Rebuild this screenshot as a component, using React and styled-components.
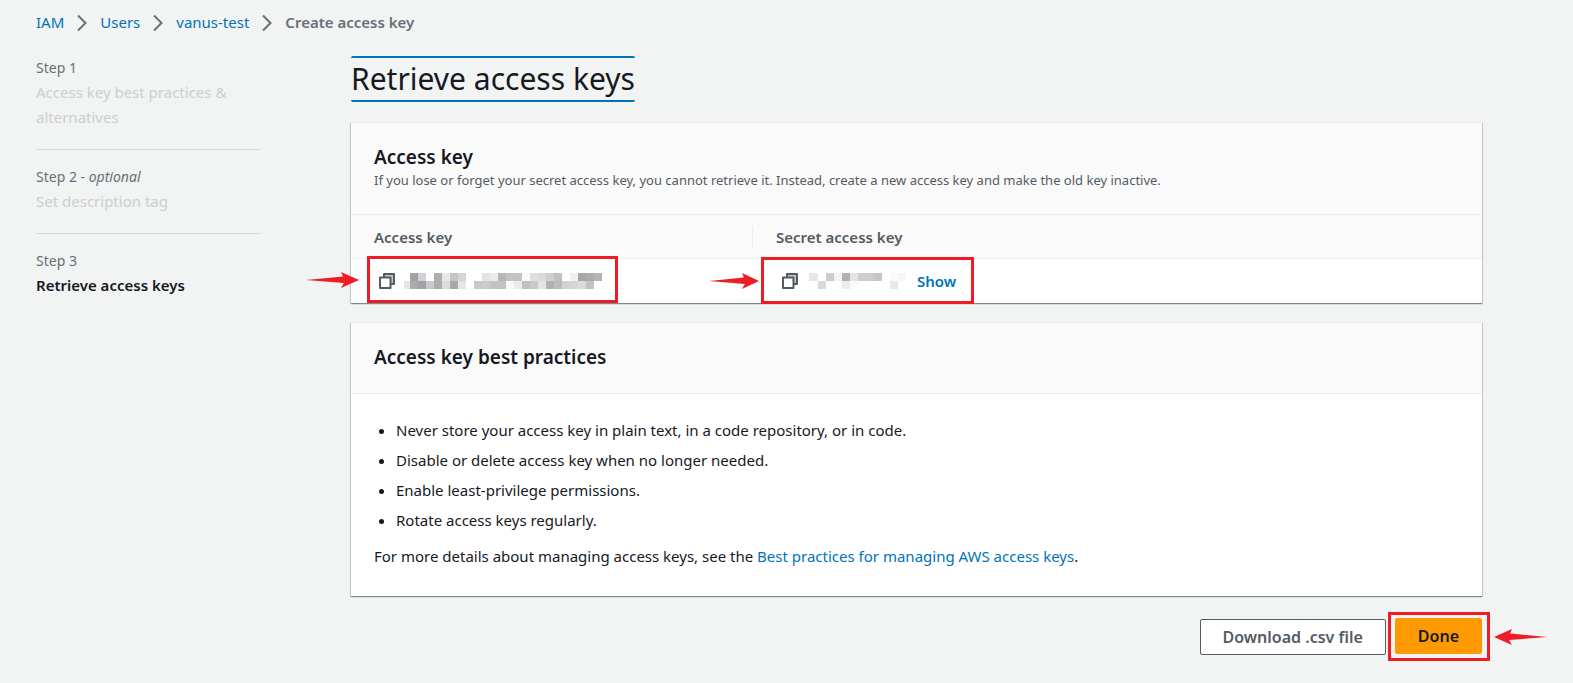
import React from 'react';
import styled, { createGlobalStyle, css } from 'styled-components';

const color = {
  page: '#f2f3f3',
  text: '#16191f',
  muted: '#687078',
  secondary: '#545b64',
  disabled: '#cbcfcf',
  line: '#eaeded',
  link: '#0073bb',
  annotation: '#ee1c25',
};

const GlobalStyle = createGlobalStyle`
  * { box-sizing: border-box; }
  body {
    margin: 0;
    background: ${color.page};
    color: ${color.text};
    font-family: "Noto Sans", "Open Sans", sans-serif;
    font-size: 15px;
    line-height: 24px;
  }
`;

const Page = styled.div`
  padding: 10px 91px 20px 36px;
`;

const Link = styled.a`
  color: ${color.link};
  text-decoration: none;
  &:hover { text-decoration: underline; }
`;

const Breadcrumbs = styled.ol`
  display: flex;
  align-items: center;
  margin: 0;
  padding: 0;
  list-style: none;
`;

const Crumb = styled.li`
  display: flex;
  align-items: center;
  color: ${color.muted};
  font-weight: ${(p) => (p.$current ? 600 : 400)};
`;

const Chevron = styled.svg`
  display: block;
  width: 10px;
  height: 18px;
  margin: 2px 13px 0;
  fill: none;
  stroke: ${color.muted};
  stroke-width: 2;
`;

const Columns = styled.div`
  display: grid;
  grid-template-columns: 225px minmax(0, 1fr);
  column-gap: 90px;
  margin-top: 22px;
`;

const Steps = styled.ol`
  margin: 0;
  padding: 0;
  list-style: none;
`;

const Step = styled.li`
  padding-bottom: 19px;
  & + & {
    border-top: 1px solid #d5dbdb;
    padding-top: 15px;
  }
`;

const StepLabel = styled.div`
  color: ${color.muted};
  font-size: 14px;
`;

const StepName = styled.div`
  line-height: 25px;
  color: ${(p) => (p.$active ? color.text : color.disabled)};
  font-weight: ${(p) => (p.$active ? 600 : 400)};
`;

const Main = styled.main`
  display: flex;
  flex-direction: column;
  align-items: stretch;
`;

const Title = styled.h1`
  align-self: flex-start;
  margin: 0 0 20px;
  border: solid ${color.link};
  border-width: 2px 0;
  border-radius: 2px;
  font-size: 30px;
  font-weight: 400;
  line-height: 42px;
`;

const Card = styled.section`
  margin-bottom: 19px;
  border-top: 1px solid ${color.line};
  background: #fff;
  box-shadow: 0 1px 1px 0 rgba(0, 28, 36, 0.3), 1px 1px 1px 0 rgba(0, 28, 36, 0.15),
    -1px 1px 1px 0 rgba(0, 28, 36, 0.15);
`;

const CardHeader = styled.header`
  padding: 22px 23px 23px;
  border-bottom: 1px solid ${color.line};
  background: #fafafa;
`;

const CardTitle = styled.h2`
  margin: 0;
  font-size: 19px;
  font-weight: 600;
  line-height: 25px;
`;

const CardNote = styled.p`
  margin: 0;
  color: ${color.secondary};
  font-size: 13px;
  line-height: 21px;
`;

const Table = styled.table`
  width: 100%;
  border-collapse: separate;
  border-spacing: 0;
  table-layout: fixed;
`;

const HeadCell = styled.th`
  width: ${(p) => (p.$narrow ? '402px' : 'auto')};
  height: 44px;
  padding: 0;
  border-bottom: 1px solid ${color.line};
  background: #fafafa;
  color: ${color.secondary};
  font-weight: 600;
  text-align: left;
`;

const HeadLabel = styled.div`
  padding: 0 23px;
  line-height: 22px;
  ${(p) => p.$divided && css`border-right: 1px solid ${color.line};`}
`;

const Cell = styled.td`
  height: 44px;
  padding: 0 ${(p) => (p.$narrow ? 16 : 8)}px;
`;

const outline = css`
  border: 3px solid ${color.annotation};
`;

/* The frame is taller than its row, so it overlaps the row's edges. */
const Highlight = styled.div`
  ${outline}
  position: relative;
  display: flex;
  align-items: center;
  width: fit-content;
  height: 47px;
  ${(p) =>
    p.$secret
      ? css`
          margin: -2px 0 -1px;
          padding: 0 15px 0 18px;
        `
      : css`
          margin: -3px 0 0;
          padding: 2px 4px 0 9px;
        `}
`;

const CopyButton = styled.button`
  display: flex;
  padding: 0;
  border: 0;
  background: none;
  color: ${color.secondary};
  cursor: pointer;
`;

const Mosaic = styled.svg`
  display: block;
  margin: 0 11px;
  shape-rendering: crispEdges;
  ${(p) => p.$tight && css`margin: 0 9px;`}
`;

const ShowButton = styled.button`
  padding: 0;
  border: 0;
  background: none;
  color: ${color.link};
  font: inherit;
  font-weight: 600;
  cursor: pointer;
`;

const ArrowDrawing = styled.svg`
  position: absolute;
  top: 50%;
  width: ${(p) => p.$length}px;
  height: 18px;
  fill: ${color.annotation};
  pointer-events: none;
  ${(p) =>
    p.$left
      ? css`left: calc(100% + 7px); transform: translateY(-50%) scaleX(-1);`
      : css`right: calc(100% + ${p.$gap}px); transform: translateY(-50%);`}
`;

const CardBody = styled.div`
  padding: 24px 23px 28px;
`;

const Practices = styled.ul`
  display: grid;
  row-gap: 6px;
  margin: 0 0 12px;
  padding-left: 22px;
`;

const Paragraph = styled.p`
  margin: 0;
`;

const Actions = styled.div`
  display: flex;
  justify-content: flex-end;
  align-items: center;
  margin: -3px -8px 0 0;
`;

const Button = styled.button`
  height: 36px;
  padding: 0 22px;
  border: 1px solid ${(p) => (p.$primary ? '#ff9900' : color.secondary)};
  border-radius: 2px;
  background: ${(p) => (p.$primary ? '#ff9900' : '#fff')};
  color: ${(p) => (p.$primary ? color.text : color.secondary)};
  font: inherit;
  font-size: 16px;
  font-weight: 600;
  line-height: 22px;
  cursor: pointer;
`;

const ActionHighlight = styled.div`
  ${outline}
  position: relative;
  display: flex;
  margin-left: 2px;
  padding: 3px 5px 4px 4px;
`;

function Arrow({ length = 53, ...props }) {
  return (
    <ArrowDrawing
      viewBox="0 0 53 18"
      preserveAspectRatio="none"
      aria-hidden="true"
      $length={length}
      {...props}
    >
      <path d="M0 9 37 5.500 35 1 53 9 35 17 38 12Z" />
    </ArrowDrawing>
  );
}

function Separator() {
  return (
    <Chevron viewBox="0 0 10 18" aria-hidden="true">
      <path d="M1 1.5 8.5 9 1 16.5" />
    </Chevron>
  );
}

function Copy({ label }) {
  return (
    <CopyButton type="button" aria-label={label}>
      <svg width="16" height="16" viewBox="0 0 16 16" stroke="currentColor" strokeWidth="2" strokeLinejoin="round">
        <path d="M5 4.500V1h10v10h-3.500" fill="#c4c7ca" />
        <path d="M1 4.500h10.500V15H1z" fill="#fff" />
      </svg>
    </CopyButton>
  );
}

/* Tiles are [x, row, colour, width]; width defaults to one 8px tile. */
const maskedKey = [
  [6, 0, '#a1a2a6'], [14, 0, '#d0d2d6'], [30, 0, '#aeaeb0'], [38, 0, '#e7e7e7'], [46, 0, '#c2c4c8'],
  [54, 0, '#d5d5d5'], [78, 0, '#e0e4e4'], [86, 0, '#e8ecea'], [94, 0, '#b6b6b8'], [102, 0, '#c3c3c5', 16],
  [118, 0, '#fafafa'], [126, 0, '#dde0e0'], [134, 0, '#dadcdb'], [142, 0, '#cfcfd1'], [150, 0, '#c1c1c4'],
  [166, 0, '#f0f0f0'], [174, 0, '#a8a8aa'], [182, 0, '#adadaf'], [190, 0, '#b5b5b7'],
  [0, 1, '#e5e5e5', 6], [6, 1, '#ababad'], [14, 1, '#a2a2a4'], [22, 1, '#c8c8ca'], [30, 1, '#adadaf'],
  [38, 1, '#dcdcde'], [46, 1, '#a8a8ab'], [54, 1, '#e5e5e5'], [70, 1, '#c9c9cb'], [78, 1, '#cbcbcd'],
  [86, 1, '#c2c2c4', 16], [102, 1, '#f9f9f9'], [110, 1, '#ececec'], [118, 1, '#c0c0c2'],
  [126, 1, '#c8c9cb'], [134, 1, '#e3e3e5'], [142, 1, '#b1b1b4'], [150, 1, '#bcbcbf'], [158, 1, '#d2d2d4'],
  [166, 1, '#d7d5d7'], [174, 1, '#dadadc'], [182, 1, '#c2c2c4'],
];

const maskedSecret = [
  [0, 0, '#e6e8e8', 9], [17, 0, '#cccccd'], [25, 0, '#f3f3f3'], [33, 0, '#b2b2b5'], [41, 0, '#e5e5e5'],
  [49, 0, '#cdcdd0', 16], [65, 0, '#c5c5c8'], [81, 0, '#fafafa'], [89, 0, '#f5f7f7'],
  [9, 1, '#dadadc'], [33, 1, '#ececee'], [41, 1, '#fcfcfc'], [81, 1, '#e9e9eb'],
];

function Masked({ width, tiles, label, ...props }) {
  return (
    <Mosaic width={width} height="16" viewBox={`0 0 ${width} 16`} role="img" aria-label={label} {...props}>
      {tiles.map(([x, row, fill, w = 8]) => (
        <rect key={`${x}-${row}`} x={x} y={row * 8} width={w} height="8" fill={fill} />
      ))}
    </Mosaic>
  );
}

export default function App() {
  return (
    <Page>
      <GlobalStyle />
      <nav aria-label="Breadcrumbs">
        <Breadcrumbs>
          <Crumb><Link href="#iam">IAM</Link><Separator /></Crumb>
          <Crumb><Link href="#users">Users</Link><Separator /></Crumb>
          <Crumb><Link href="#vanus-test">vanus-test</Link><Separator /></Crumb>
          <Crumb $current aria-current="page">Create access key</Crumb>
        </Breadcrumbs>
      </nav>

      <Columns>
        <nav aria-label="Steps">
          <Steps>
            <Step>
              <StepLabel>Step 1</StepLabel>
              <StepName>Access key best practices &amp; alternatives</StepName>
            </Step>
            <Step>
              <StepLabel>Step 2 - <em>optional</em></StepLabel>
              <StepName>Set description tag</StepName>
            </Step>
            <Step aria-current="step">
              <StepLabel>Step 3</StepLabel>
              <StepName $active>Retrieve access keys</StepName>
            </Step>
          </Steps>
        </nav>

        <Main>
          <Title>Retrieve access keys</Title>

          <Card>
            <CardHeader>
              <CardTitle>Access key</CardTitle>
              <CardNote>
                If you lose or forget your secret access key, you cannot retrieve it. Instead, create a new
                access key and make the old key inactive.
              </CardNote>
            </CardHeader>
            <Table>
              <thead>
                <tr>
                  <HeadCell $narrow scope="col"><HeadLabel $divided>Access key</HeadLabel></HeadCell>
                  <HeadCell scope="col"><HeadLabel>Secret access key</HeadLabel></HeadCell>
                </tr>
              </thead>
              <tbody>
                <tr>
                  <Cell $narrow>
                    <Highlight>
                      <Arrow $gap={11} />
                      <Copy label="Copy access key" />
                      <Masked $tight width={198} tiles={maskedKey} label="Access key, masked" />
                    </Highlight>
                  </Cell>
                  <Cell>
                    <Highlight $secret>
                      <Arrow $gap={5} length={50} />
                      <Copy label="Copy secret access key" />
                      <Masked width={97} tiles={maskedSecret} label="Secret access key, masked" />
                      <ShowButton type="button">Show</ShowButton>
                    </Highlight>
                  </Cell>
                </tr>
              </tbody>
            </Table>
          </Card>

          <Card>
            <CardHeader>
              <CardTitle>Access key best practices</CardTitle>
            </CardHeader>
            <CardBody>
              <Practices>
                <li>Never store your access key in plain text, in a code repository, or in code.</li>
                <li>Disable or delete access key when no longer needed.</li>
                <li>Enable least-privilege permissions.</li>
                <li>Rotate access keys regularly.</li>
              </Practices>
              <Paragraph>
                For more details about managing access keys, see the{' '}
                <Link href="#best-practices">Best practices for managing AWS access keys</Link>.
              </Paragraph>
            </CardBody>
          </Card>

          <Actions>
            <Button type="button">Download .csv file</Button>
            <ActionHighlight>
              <Button $primary type="button">Done</Button>
              <Arrow $left />
            </ActionHighlight>
          </Actions>
        </Main>
      </Columns>
    </Page>
  );
}
